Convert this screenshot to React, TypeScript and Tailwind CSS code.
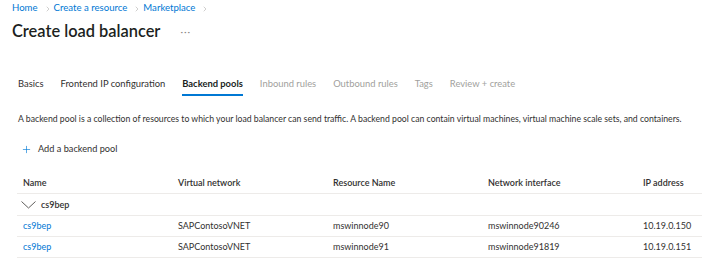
import { Plus, ChevronRight } from "lucide-react";

const tabs = [
	{ label: "Basics", state: "done" },
	{ label: "Frontend IP configuration", state: "done" },
	{ label: "Backend pools", state: "active" },
	{ label: "Inbound rules", state: "off" },
	{ label: "Outbound rules", state: "off" },
	{ label: "Tags", state: "off" },
	{ label: "Review + create", state: "off" },
];

const rows = [
	{ name: "cs9bep", vnet: "SAPContosoVNET", resource: "mswinnode90", nic: "mswinnode90246", ip: "10.19.0.150" },
	{ name: "cs9bep", vnet: "SAPContosoVNET", resource: "mswinnode91", nic: "mswinnode91819", ip: "10.19.0.151" },
];

const cols = "grid grid-cols-[155px_155px_155px_155px_1fr]";

function Crumb() {
	return <ChevronRight className="w-[8px] h-[8px] ml-[6px] mr-[2px] text-[#a19f9d]" strokeWidth={1.5} />;
}

function App() {
	return (
		<div
			className="w-[702px] h-[275px] bg-white overflow-hidden text-[#323130]"
			style={{ fontFamily: 'Lato, "Noto Sans", sans-serif' }}
		>
			<div className="flex items-center pl-[12px] pt-[1px] h-[16px] text-[9.6px] text-[#0078d4]">
				<span>Home</span>
				<Crumb />
				<span>Create a resource</span>
				<Crumb />
				<span>Marketplace</span>
				<Crumb />
			</div>

			<div className="flex items-center pl-[12px] mt-[4px] h-[22px]">
				<h1 className="text-[16.4px] font-semibold text-[#201f1e]">Create load balancer</h1>
				<span className="ml-[20px] text-[10px] text-[#8a8886] tracking-[1px]">···</span>
			</div>

			<div className="flex items-start pl-[18px] mt-[35px] gap-[17px] text-[9.4px] h-[24px]">
				{tabs.map((t) => (
					<div key={t.label} className="flex flex-col">
						<span
							className={
								t.state === "active"
									? "font-bold text-[#201f1e]"
									: t.state === "done"
										? "text-[#323130]"
										: "text-[#a19f9d]"
							}
						>
							{t.label}
						</span>
						{t.state === "active" && <div className="h-[2px] bg-[#0078d4] mt-[3px]" />}
					</div>
				))}
			</div>

			<p className="pl-[18px] mt-[11px] text-[8.7px] whitespace-nowrap">
				A backend pool is a collection of resources to which your load balancer can send traffic. A backend pool can
				contain virtual machines, virtual machine scale sets, and containers.
			</p>

			<div className="flex items-center pl-[21px] mt-[17px] h-[14px] gap-[6px] text-[9.2px]">
				<Plus className="w-[11px] h-[11px] text-[#0078d4]" strokeWidth={1.4} />
				<span>Add a backend pool</span>
			</div>

			<div className="ml-[17px] mt-[16px] text-[9px]">
				<div className={`${cols} h-[22px] items-center border-b border-[#edebe9] font-semibold text-[#323130]`}>
					<div className="pl-[6px]">Name</div>
					<div className="pl-[6px]">Virtual network</div>
					<div className="pl-[6px]">Resource Name</div>
					<div className="pl-[6px]">Network interface</div>
					<div className="pl-[6px]">IP address</div>
				</div>
				<div className="flex items-center h-[22px] border-b border-[#edebe9] pl-[4px] gap-[5px] font-semibold">
					<svg width="15" height="8" viewBox="0 0 15 8" fill="none" stroke="#605e5c" strokeWidth="1">
						<polyline points="0.5,0.5 7.5,7 14.5,0.5" />
					</svg>
					<span>cs9bep</span>
				</div>
				{rows.map((r) => (
					<div key={r.resource} className={`${cols} h-[21px] items-center border-b border-[#edebe9]`}>
						<div className="pl-[6px] text-[#0078d4]">{r.name}</div>
						<div className="pl-[6px]">{r.vnet}</div>
						<div className="pl-[6px]">{r.resource}</div>
						<div className="pl-[6px]">{r.nic}</div>
						<div className="pl-[6px]">{r.ip}</div>
					</div>
				))}
			</div>
		</div>
	);
}

export default App;
